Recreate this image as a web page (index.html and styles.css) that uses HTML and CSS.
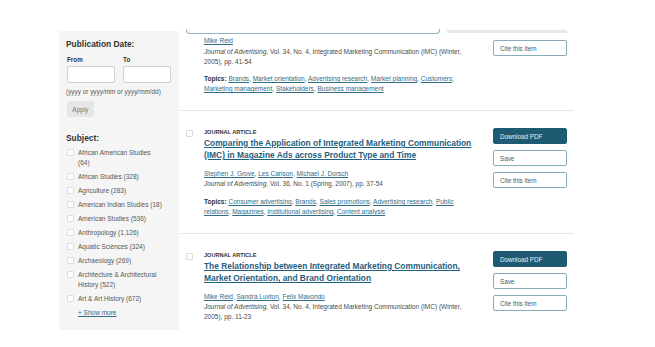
FILE: index.html
```html
<!DOCTYPE html>
<html lang="en">
<head>
<meta charset="utf-8">
<title>Search results</title>
<link rel="stylesheet" href="styles.css">
</head>
<body>
<div class="page">
  <aside class="sidebar">
    <section class="filter">
      <h3 class="filter-title">Publication Date:</h3>
      <div class="date-labels"><span>From</span><span>To</span></div>
      <div class="date-inputs"><input type="text" class="date-input"><input type="text" class="date-input"></div>
      <p class="hint">(yyyy or yyyy/mm or yyyy/mm/dd)</p>
      <button class="apply">Apply</button>
    </section>
    <section class="filter subject">
      <h3 class="filter-title">Subject:</h3>
      <ul class="subject-list">
        <li><span class="box"></span><span class="label">African American Studies (64)</span></li>
        <li><span class="box"></span><span class="label">African Studies (328)</span></li>
        <li><span class="box"></span><span class="label">Agriculture (283)</span></li>
        <li><span class="box"></span><span class="label">American Indian Studies (18)</span></li>
        <li><span class="box"></span><span class="label">American Studies (536)</span></li>
        <li><span class="box"></span><span class="label">Anthropology (1,126)</span></li>
        <li><span class="box"></span><span class="label">Aquatic Sciences (324)</span></li>
        <li><span class="box"></span><span class="label">Archaeology (269)</span></li>
        <li><span class="box"></span><span class="label">Architecture &amp; Architectural History (522)</span></li>
        <li><span class="box"></span><span class="label">Art &amp; Art History (672)</span></li>
      </ul>
      <a class="show-more" href="#">+ Show more</a>
    </section>
  </aside>

  <main class="results">
    <div class="top-stub"><div class="search-edge"></div><div class="stub-bar"></div></div>

    <article class="result partial">
      <div class="check-col"></div>
      <div class="body">
        <p class="authors"><a href="#">Mike Reid</a></p>
        <p class="journal"><i>Journal of Advertising</i>, Vol. 34, No. 4, Integrated Marketing Communication (IMC) (Winter, 2005), pp. 41-54</p>
        <p class="topics"><b>Topics:</b> <a href="#">Brands</a>, <a href="#">Market orientation</a>, <a href="#">Advertising research</a>, <a href="#">Market planning</a>, <a href="#">Customers</a>, <a href="#">Marketing management</a>, <a href="#">Stakeholders</a>, <a href="#">Business management</a></p>
      </div>
      <div class="actions"><button class="btn">Cite this item</button></div>
    </article>

    <article class="result">
      <div class="check-col"><span class="box"></span></div>
      <div class="body">
        <p class="type">JOURNAL ARTICLE</p>
        <h2 class="title"><a href="#">Comparing the Application of Integrated Marketing Communication (IMC) in Magazine Ads across Product Type and Time</a></h2>
        <p class="authors"><a href="#">Stephen J. Grove</a>, <a href="#">Les Carlson</a>, <a href="#">Michael J. Dorsch</a></p>
        <p class="journal"><i>Journal of Advertising</i>, Vol. 36, No. 1 (Spring, 2007), pp. 37-54</p>
        <p class="topics"><b>Topics:</b> <a href="#">Consumer advertising</a>, <a href="#">Brands</a>, <a href="#">Sales promotions</a>, <a href="#">Advertising research</a>, <a href="#">Public relations</a>, <a href="#">Magazines</a>, <a href="#">Institutional advertising</a>, <a href="#">Content analysis</a></p>
      </div>
      <div class="actions">
        <button class="btn primary">Download PDF</button>
        <button class="btn">Save</button>
        <button class="btn">Cite this item</button>
      </div>
    </article>

    <article class="result last">
      <div class="check-col"><span class="box"></span></div>
      <div class="body">
        <p class="type">JOURNAL ARTICLE</p>
        <h2 class="title"><a href="#">The Relationship between Integrated Marketing Communication, Market Orientation, and Brand Orientation</a></h2>
        <p class="authors"><a href="#">Mike Reid</a>, <a href="#">Sandra Luxton</a>, <a href="#">Felix Mavondo</a></p>
        <p class="journal"><i>Journal of Advertising</i>, Vol. 34, No. 4, Integrated Marketing Communication (IMC) (Winter, 2005), pp. 11-23</p>
      </div>
      <div class="actions">
        <button class="btn primary">Download PDF</button>
        <button class="btn">Save</button>
        <button class="btn">Cite this item</button>
      </div>
    </article>
  </main>
</div>
</body>
</html>
```

FILE: styles.css
```css
* { box-sizing: border-box; }
html, body { margin: 0; padding: 0; background: #fff; }
body {
  font-family: "Liberation Sans", Arial, sans-serif;
  color: #4a4a4a;
  font-size: 6.5px;
  width: 655px;
  height: 347px;
  overflow: hidden;
}
p, h2, h3, ul { margin: 0; padding: 0; }
a { color: #2f6d88; text-decoration: underline; }

.page {
  display: flex;
  align-items: flex-start;
  padding-left: 59px;
}

/* Sidebar */
.sidebar {
  width: 120px;
  margin-top: 31px;
  background: #f5f5f5;
  padding: 8px 8px 12px 8px;
}
.filter-title {
  font-size: 8.4px;
  line-height: 10px;
  font-weight: bold;
  color: #333;
  margin-left: -1px;
}
.date-labels {
  display: flex;
  gap: 8px;
  margin-top: 7px;
  font-size: 6.3px;
  line-height: 8px;
  font-weight: bold;
  color: #333;
}
.date-labels span { width: 48px; }
.date-inputs {
  display: flex;
  gap: 8px;
  margin-top: 2px;
}
.date-input {
  width: 48px;
  height: 17px;
  margin: 0;
  border: 1px solid #cfcfcf;
  border-radius: 2px;
  background: #fff;
  padding: 0;
}
.hint {
  margin-top: 5px;
  margin-left: -1px;
  font-size: 6.4px;
  line-height: 8px;
  color: #555;
}
.apply {
  display: block;
  margin-top: 5px;
  width: 27px;
  height: 16px;
  padding: 0;
  border: none;
  border-radius: 2px;
  background: #e6e6e6;
  color: #777;
  font-family: inherit;
  font-size: 6.5px;
}
.subject .filter-title { margin-top: 16px; }
.subject-list {
  list-style: none;
  margin-top: 5px;
  display: flex;
  flex-direction: column;
  gap: 4px;
}
.subject-list li {
  display: flex;
  gap: 4px;
  line-height: 10px;
  color: #555;
}
.box {
  display: block;
  flex: none;
  width: 7px;
  height: 7px;
  margin-top: 1px;
  border: 1px solid #dcdcdc;
  background: #fff;
  border-radius: 1px;
}
.subject-list .label { width: 84px; }
.show-more {
  display: block;
  margin-top: 4px;
  margin-left: 11px;
  line-height: 10px;
  color: #2f6d88;
}

/* Results */
.results {
  width: 394px;
  margin-left: 1px;
}
.top-stub {
  display: flex;
  align-items: flex-end;
  gap: 7px;
  height: 34px;
  padding-left: 6px;
}
.search-edge {
  width: 254px;
  height: 5px;
  border: 1px solid #8fb4c2;
  border-top: none;
  border-radius: 0 0 4px 4px;
}
.stub-bar {
  width: 120px;
  height: 3px;
  margin-bottom: 1px;
  background: #e8e8e8;
}
.result {
  display: grid;
  grid-template-columns: 18px 1fr 74px;
  padding: 17px 7px 16px 6px;
  border-bottom: 1px solid #e6e6e6;
}
.result.partial { padding-top: 2px; }
.result.last { border-bottom: none; }
.check-col .box { margin-top: 2px; }
.body {
  line-height: 10px;
  padding-right: 16px;
}
.type {
  font-size: 5.6px;
  line-height: 8px;
  font-weight: bold;
  color: #333;
}
.title {
  margin-top: 1px;
  font-size: 8.4px;
  line-height: 12px;
  font-weight: bold;
}
.title a { color: #1f6080; }
.authors { margin-top: 8px; }
.partial .authors { margin-top: 0; }
.journal { color: #4a4a4a; }
.partial .journal { margin-top: 1px; }
.topics { margin-top: 8px; color: #4a4a4a; }
.topics b { color: #333; }
.partial .topics { margin-top: 7px; }

.actions {
  display: flex;
  flex-direction: column;
  gap: 6px;
}
.partial .actions { padding-top: 4px; }
.btn {
  width: 74px;
  height: 16px;
  margin: 0;
  padding: 0 0 0 6px;
  text-align: left;
  font-family: inherit;
  font-size: 6.3px;
  color: #2f6579;
  background: #fff;
  border: 1px solid #86adb9;
  border-radius: 2px;
}
.btn.primary {
  background: #1e5b72;
  border-color: #1e5b72;
  color: #e8f0f3;
}
```
